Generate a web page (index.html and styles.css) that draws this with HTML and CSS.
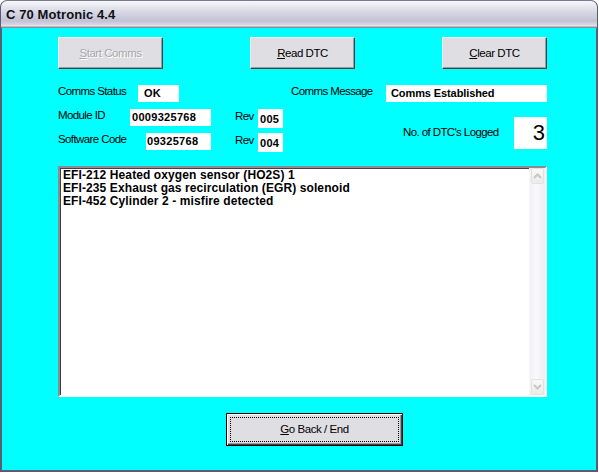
FILE: index.html
```html
<!DOCTYPE html>
<html lang="en">
<head>
    <meta charset="UTF-8">
    <title>C 70 Motronic 4.4</title>
    <link rel="stylesheet" href="styles.css">
</head>
<body>
    <div class="window">
        <div class="titlebar">C 70 Motronic 4.4</div>
        <div class="client">
            <div class="btn-row">
                <div class="btn disabled"><u>S</u>tart Comms</div>
                <div class="btn"><u>R</u>ead DTC</div>
                <div class="btn"><u>C</u>lear DTC</div>
            </div>

            <div class="info">
                <div class="left">
                    <div class="row">
                        <span class="lbl w-status">Comms Status</span>
                        <span class="box b-ok">OK</span>
                    </div>
                    <div class="row">
                        <span class="lbl w-module">Module ID</span>
                        <span class="box b-module">0009325768</span>
                        <span class="lbl w-rev">Rev</span>
                        <span class="box rev">005</span>
                    </div>
                    <div class="row last">
                        <span class="lbl w-soft">Software Code</span>
                        <span class="box b-soft">09325768</span>
                        <span class="lbl w-rev">Rev</span>
                        <span class="box rev">004</span>
                    </div>
                </div>
                <div class="right">
                    <div class="row">
                        <span class="lbl w-msg">Comms Message</span>
                        <span class="box b-msg">Comms Established</span>
                    </div>
                    <div class="row dtc-row">
                        <span class="lbl w-count">No. of DTC's Logged</span>
                        <span class="count">3</span>
                    </div>
                </div>
            </div>

            <div class="dtc-list">
                <div class="dtc-text">
                    <div>EFI-212 Heated oxygen sensor (HO2S) 1</div>
                    <div>EFI-235 Exhaust gas recirculation (EGR) solenoid</div>
                    <div>EFI-452 Cylinder 2 - misfire detected</div>
                </div>
                <div class="scroll">
                    <div class="sbtn">
                        <svg width="9" height="6" viewBox="0 0 9 6"><path d="M1 5 L4.5 1.5 L8 5" fill="none" stroke="#c6c6ce" stroke-width="2"/></svg>
                    </div>
                    <div class="track"></div>
                    <div class="sbtn">
                        <svg width="9" height="6" viewBox="0 0 9 6"><path d="M1 1 L4.5 4.5 L8 1" fill="none" stroke="#c6c6ce" stroke-width="2"/></svg>
                    </div>
                </div>
            </div>

            <div class="btn default">
                <div class="focus"><u>G</u>o Back / End</div>
            </div>
        </div>
    </div>
</body>
</html>
```
FILE: styles.css
```css
* {margin: 0;padding: 0;box-sizing: border-box;}

body {
    background: #fff;
    font-family: "Liberation Sans", Arial, sans-serif;
}

.window {
    width: 598px;
    height: 472px;
    border: 1px solid #5a5a72;
    border-top-color: #7a7a92;
    border-radius: 7px 7px 0 0;
    overflow: hidden;
    background: #5e5e74;
    display: flex;
    flex-direction: column;
}

.titlebar {
    height: 27px;
    padding: 6px 0 0 5px;
    font-size: 13px;
    font-weight: bold;
    color: #101018;
    letter-spacing: 0.1px;
    background: linear-gradient(#f8f8fb 0px, #e8e8f0 5px, #d0d0de 14px, #c2c2d4 20px, #d8d8e4 24px, #ececf2 25px, #8c8ca0 26px);
}

.client {
    flex: 1;
    margin: 0 1px 1px 1px;
    background: #00ffff;
    padding: 9px 0 0 56px;
}

.btn-row {
    display: flex;
    gap: 87px;
}

.btn {
    width: 105px;
    height: 32px;
    background: #dfdfe3;
    border: 1px solid;
    border-color: #fff #404048 #404048 #fff;
    box-shadow: inset -1px -1px 0 #9a9aa2;
    font-size: 11.5px;
    letter-spacing: -0.45px;
    color: #000;
    display: flex;
    align-items: center;
    justify-content: center;
    padding-bottom: 1px;
}

.btn.disabled {
    color: #a8a8ac;
    text-shadow: 1px 1px 0 #fff;
}

.btn.default {
    width: 177px;
    height: 33px;
    margin: 16px 0 0 168px;
    border: 1px solid #000;
    box-shadow: inset 1px 1px 0 #fff, inset -1px -1px 0 #404048, inset -2px -2px 0 #9a9aa2;
    padding: 3px;
}

.focus {
    width: 100%;
    height: 100%;
    border: 1px dotted #000;
    display: flex;
    align-items: center;
    justify-content: center;
    padding-bottom: 1px;
}

.info {
    display: flex;
    margin-top: 16px;
}

.left {
    width: 233px;
}

.row {
    display: flex;
    align-items: flex-start;
    height: 24px;
}

.row.last {
    height: 19px;
}

.lbl {
    font-size: 11.5px;
    line-height: 13px;
    letter-spacing: -0.6px;
    color: #000;
    white-space: nowrap;
}

.w-status {width: 80px;}
.w-module {width: 72px;}
.w-soft {width: 88px;}
.w-rev {width: 23px;margin-left: 24px;padding-top: 1px;}
.w-msg {width: 95px;}
.w-count {width: 111px;margin-left: 112px;padding-top: 9px;}

.box {
    background: #fff;
    height: 17px;
    font-size: 11px;
    font-weight: bold;
    line-height: 17px;
    letter-spacing: 0.3px;
    color: #000;
    white-space: nowrap;
}

.b-ok {width: 41px;padding-left: 6px;}
.b-module {width: 81px;padding-left: 2px;}
.b-soft {width: 65px;padding-left: 1px;}
.b-msg {width: 161px;padding-left: 5px;letter-spacing: -0.1px;}
.rev {width: 25px;height: 19px;line-height: 20px;padding-left: 2px;}

.dtc-row {
    margin-top: 8px;
    height: 32px;
}

.count {
    width: 33px;
    height: 32px;
    background: #fff;
    font-size: 22px;
    line-height: 32px;
    text-align: right;
    padding-right: 2px;
}

.dtc-list {
    display: flex;
    width: 489px;
    height: 231px;
    margin-top: 14px;
    background: #fff;
    border: 2px solid;
    border-color: #8c8c94 #fff #fff #8c8c94;
    box-shadow: inset 1px 1px 0 #404048;
}

.dtc-text {
    flex: 1;
    padding: 1px 0 0 3px;
    font-size: 12px;
    font-weight: bold;
    line-height: 13px;
    letter-spacing: 0.1px;
    color: #000;
}

.scroll {
    width: 16px;
    display: flex;
    flex-direction: column;
    background: linear-gradient(90deg, #f0f0f6, #fafafc 40%, #ececf2);
    border-left: 1px solid #f6f6fa;
}

.track {
    flex: 1;
}

.sbtn {
    height: 16px;
    margin: 0 1px;
    background: linear-gradient(#f8f8f6, #ecece6);
    border: 1px solid #e2e2de;
    border-radius: 2px;
    display: flex;
    align-items: center;
    justify-content: center;
}
```
